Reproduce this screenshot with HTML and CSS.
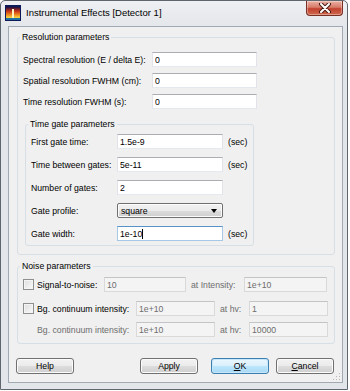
FILE: index.html
```html
<!DOCTYPE html>
<html lang="en">
<head>
    <meta charset="UTF-8">
    <title>Instrumental Effects [Detector 1]</title>
    <link rel="stylesheet" href="styles.css">
</head>
<body>
    <div class="window">
        <div class="titlebar">
            <svg class="app-icon" width="16" height="16" viewBox="0 0 16 16">
                <defs>
                    <linearGradient id="spec" x1="0" y1="0" x2="0" y2="1">
                        <stop offset="0" stop-color="#1a1040"/>
                        <stop offset="0.3" stop-color="#c0301a"/>
                        <stop offset="0.6" stop-color="#f08a20"/>
                        <stop offset="0.8" stop-color="#f6d040"/>
                        <stop offset="1" stop-color="#2a9a80"/>
                    </linearGradient>
                </defs>
                <rect x="0" y="0" width="16" height="16" fill="#0c1a5a"/>
                <rect x="1" y="2" width="14" height="13" fill="url(#spec)"/>
                <rect x="7" y="4" width="2" height="11" fill="#fff4c0"/>
                <rect x="1" y="13" width="14" height="2" fill="#1f6fa0"/>
            </svg>
            <span class="title">Instrumental Effects [Detector 1]</span>
            <div class="close-btn">
                <svg width="14" height="10" viewBox="0 0 14 10">
                    <path d="M3 1 L11 9 M11 1 L3 9" stroke="#4a1a14" stroke-width="4" stroke-linecap="round"/>
                    <path d="M3 1 L11 9 M11 1 L3 9" stroke="#ffffff" stroke-width="2" stroke-linecap="round"/>
                </svg>
            </div>
        </div>

        <div class="client">
            <fieldset class="group res-group">
                <legend>Resolution parameters</legend>
                <div class="row res-row">
                    <label class="res-label">Spectral resolution (E / delta E):</label>
                    <input class="field res-field" type="text" value="0">
                </div>
                <div class="row res-row">
                    <label class="res-label">Spatial resolution FWHM (cm):</label>
                    <input class="field res-field" type="text" value="0">
                </div>
                <div class="row res-row">
                    <label class="res-label">Time resolution FWHM (s):</label>
                    <input class="field res-field" type="text" value="0">
                </div>

                <fieldset class="group gate-group">
                    <legend>Time gate parameters</legend>
                    <div class="row gate-row">
                        <label class="gate-label">First gate time:</label>
                        <input class="field gate-field" type="text" value="1.5e-9">
                        <span class="unit">(sec)</span>
                    </div>
                    <div class="row gate-row">
                        <label class="gate-label">Time between gates:</label>
                        <input class="field gate-field" type="text" value="5e-11">
                        <span class="unit">(sec)</span>
                    </div>
                    <div class="row gate-row">
                        <label class="gate-label">Number of gates:</label>
                        <input class="field gate-field" type="text" value="2">
                    </div>
                    <div class="row gate-row">
                        <label class="gate-label">Gate profile:</label>
                        <div class="combo gate-field">
                            <span>square</span>
                            <span class="combo-arrow"></span>
                        </div>
                    </div>
                    <div class="row gate-row">
                        <label class="gate-label">Gate width:</label>
                        <div class="field gate-field focused">1e-10<span class="caret"></span></div>
                        <span class="unit">(sec)</span>
                    </div>
                </fieldset>
            </fieldset>

            <fieldset class="group noise-group">
                <legend>Noise parameters</legend>
                <div class="row noise-row first">
                    <span class="check"></span>
                    <label class="noise-label snr-label">Signal-to-noise:</label>
                    <input class="field snr-field" type="text" value="10" disabled>
                    <label class="noise-label at-int-label disabled">at Intensity:</label>
                    <input class="field at-int-field" type="text" value="1e+10" disabled>
                </div>
                <div class="row noise-row second">
                    <span class="check"></span>
                    <label class="noise-label bg-label">Bg. continuum intensity:</label>
                    <input class="field bg-field" type="text" value="1e+10" disabled>
                    <label class="noise-label hv-label disabled">at hv:</label>
                    <input class="field hv-field" type="text" value="1" disabled>
                </div>
                <div class="row noise-row third">
                    <span class="check-space"></span>
                    <label class="noise-label bg-label disabled">Bg. continuum intensity:</label>
                    <input class="field bg-field" type="text" value="1e+10" disabled>
                    <label class="noise-label hv-label disabled">at hv:</label>
                    <input class="field hv-field" type="text" value="10000" disabled>
                </div>
            </fieldset>

            <div class="buttons">
                <button class="btn btn-help">Help</button>
                <button class="btn btn-apply">Apply</button>
                <button class="btn btn-ok default"><u>O</u>K</button>
                <button class="btn btn-cancel"><u>C</u>ancel</button>
            </div>

            <svg class="grip" width="8" height="8" viewBox="0 0 8 8">
                <rect x="6" y="0" width="1" height="1" fill="#b8b8b8"/>
                <rect x="3" y="3" width="1" height="1" fill="#b8b8b8"/>
                <rect x="6" y="3" width="1" height="1" fill="#b8b8b8"/>
                <rect x="0" y="6" width="1" height="1" fill="#b8b8b8"/>
                <rect x="3" y="6" width="1" height="1" fill="#b8b8b8"/>
                <rect x="6" y="6" width="1" height="1" fill="#b8b8b8"/>
            </svg>
        </div>
    </div>
</body>
</html>
```

FILE: styles.css
```css
* {
    box-sizing: border-box;
}
body {
    margin: 0;
    width: 350px;
    height: 391px;
    background-color: #ffffff;
    font-family: "Liberation Sans", Arial, sans-serif;
    font-size: 8.7px;
    color: #000000;
}
.window {
    width: 348px;
    height: 390px;
    border: 1px solid #5f666e;
    border-radius: 5px 5px 0 0;
    background: linear-gradient(#eef0f3, #e2e5e9 30px, #e2e5e9);
    padding: 0 4px 6px 7px;
    display: flex;
    flex-direction: column;
}
.titlebar {
    height: 25px;
    display: flex;
    align-items: flex-start;
    margin-left: -5px;
}
.app-icon {
    margin: 4px 0 0 2px;
}
.title {
    margin: 6px 0 0 5px;
    font-size: 9.5px;
    line-height: 12px;
    color: #000000;
}
.close-btn {
    margin-left: auto;
    margin-right: 0;
    width: 37px;
    height: 15px;
    border: 1px solid #7a2f25;
    border-top: none;
    border-radius: 0 0 4px 4px;
    background: linear-gradient(#eab1a5 0%, #d77a68 45%, #c2412e 55%, #cf6a4f 100%);
    box-shadow: inset 0 0 0 1px rgba(255, 255, 255, 0.35);
    display: flex;
    align-items: center;
    justify-content: center;
}
.client {
    flex: 1;
    position: relative;
    border: 1px solid #a1a9b3;
    background-color: #f0f0f0;
    padding: 5px 7px 0 8px;
}
.group {
    margin: 0;
    padding: 0;
    min-width: 0;
    border: 1px solid #d5dfe5;
    border-radius: 3px;
}
.group legend {
    margin-left: 2px;
    padding: 0 2px;
    line-height: 10px;
    color: #000000;
}
.res-group {
    padding: 10px 0 8px 0;
}
.row {
    display: flex;
    align-items: center;
    height: 15px;
}
.res-row {
    margin-left: 5px;
}
.res-row + .res-row {
    margin-top: 6px;
}
.res-label {
    width: 129px;
}
.field {
    height: 15px;
    border: 1px solid #e2e3ea;
    border-top-color: #abadb3;
    border-bottom-color: #e3e9ef;
    background-color: #ffffff;
    padding: 0 2px;
    font-family: "Liberation Sans", Arial, sans-serif;
    font-size: 8.7px;
    color: #000000;
    outline: none;
    display: flex;
    align-items: center;
}
.res-field {
    width: 105px;
}
.gate-group {
    margin: 10px 0 0 7px;
    width: 229px;
    padding: 5px 0 4px 0;
}
.gate-row {
    margin-left: 5px;
}
.gate-row + .gate-row {
    margin-top: 8px;
}
.gate-label {
    width: 86px;
}
.gate-field {
    width: 106px;
}
.unit {
    margin-left: 5px;
}
.focused {
    border-color: #a6c8e6;
    border-top-color: #5793c8;
}
.caret {
    display: inline-block;
    width: 1px;
    height: 10px;
    background-color: #000000;
}
.combo {
    height: 15px;
    border: 1px solid #707070;
    border-radius: 2px;
    background: linear-gradient(#f2f2f2 0%, #ebebeb 50%, #dddddd 50%, #cfcfcf 100%);
    box-shadow: inset 0 0 0 1px #fcfcfc;
    padding: 0 3px;
    display: flex;
    align-items: center;
    justify-content: space-between;
}
.combo-arrow {
    width: 0;
    height: 0;
    margin-right: 2px;
    border-left: 3px solid transparent;
    border-right: 3px solid transparent;
    border-top: 4px solid #000000;
}
.noise-group {
    margin-top: 6px;
    padding: 6px 0 6px 0;
}
.noise-row {
    margin-left: 5px;
}
.noise-row.second {
    margin-top: 9px;
}
.noise-row.third {
    margin-top: 6px;
}
.check {
    width: 11px;
    height: 11px;
    border: 1px solid #8e8f8f;
    background: linear-gradient(135deg, #dcdcdc, #fbfbfb);
    box-shadow: inset 0 0 0 1px #f4f4f4;
    margin-right: 3px;
}
.check-space {
    width: 14px;
}
.noise-label.disabled {
    color: #6d6d6d;
}
.field:disabled {
    background-color: #f4f4f4;
    border-color: #d9d9d9;
    border-top-color: #c2c4c8;
    color: #6d6d6d;
}
.snr-label {
    width: 67px;
}
.snr-field {
    width: 82px;
}
.at-int-label {
    width: 53px;
    margin-left: 5px;
}
.at-int-field {
    width: 83px;
}
.bg-label {
    width: 99px;
}
.bg-field {
    width: 79px;
}
.hv-label {
    width: 29px;
    margin-left: 5px;
}
.hv-field {
    width: 79px;
}
.buttons {
    display: flex;
    margin: 14px 1px 0 -1px;
}
.btn {
    width: 58px;
    height: 16px;
    padding: 0;
    border: 1px solid #707070;
    border-radius: 3px;
    background: linear-gradient(#f2f2f2 0%, #ebebeb 50%, #dddddd 50%, #cfcfcf 100%);
    box-shadow: inset 0 0 0 1px #fcfcfc;
    font-family: "Liberation Sans", Arial, sans-serif;
    font-size: 8.7px;
    color: #000000;
}
.btn-help {
    margin-right: auto;
}
.btn-ok {
    margin-left: 13px;
}
.btn-cancel {
    margin-left: 7px;
}
.btn.default {
    border-color: #3c7fb1;
    background: linear-gradient(#eaf6fd 0%, #d9f0fc 50%, #bee6fd 50%, #a7d9f5 100%);
    box-shadow: inset 0 0 0 1px #c8e6f8;
}
.grip {
    position: absolute;
    right: 1px;
    bottom: 1px;
}
```
